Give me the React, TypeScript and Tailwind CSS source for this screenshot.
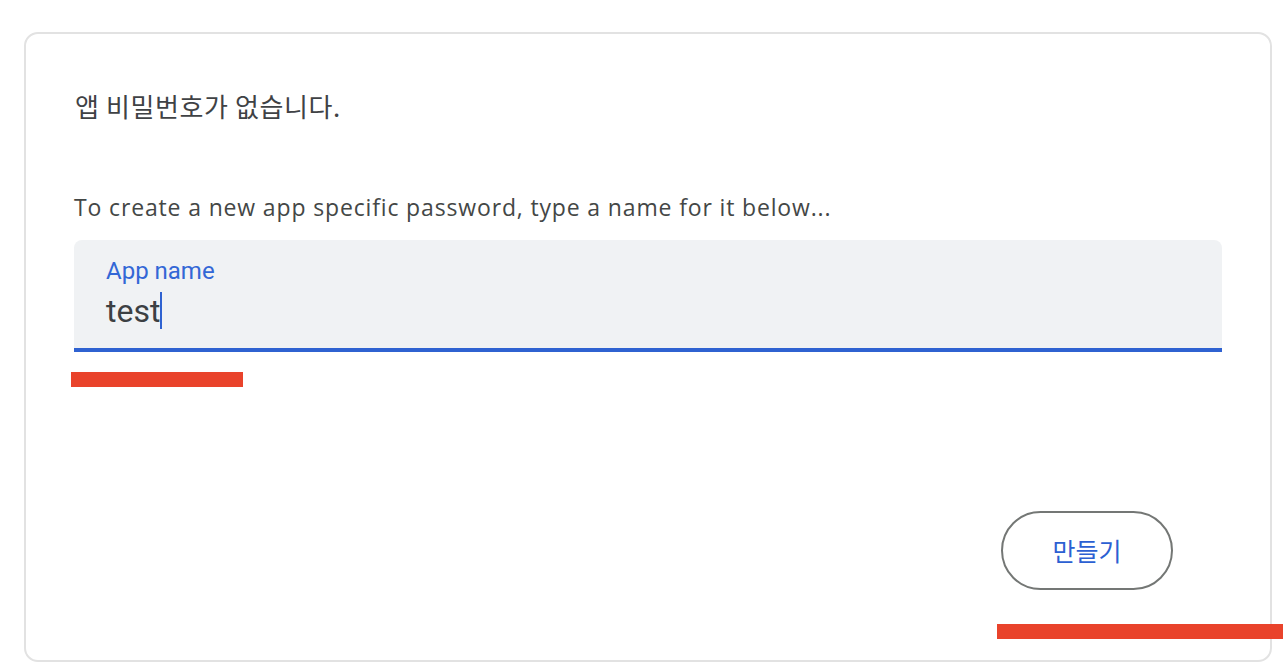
import React from 'react';

const latin = "font-['Roboto','Noto_Sans_CJK_KR',sans-serif]";
const body = "font-['Open_Sans','Noto_Sans_CJK_KR',sans-serif]";
const korean = "font-['Noto_Sans_CJK_KR','Noto_Sans',sans-serif]";

const AppPasswordCard: React.FC = () => {
  return (
    <div className="ml-[24px] mt-[32px] h-[630px] w-[1248px] rounded-[14px] border-2 border-[#e2e2e2] bg-white px-[48px] pt-[52px]">
      {/* 비어있는 상태 */}
      <p className={`${korean} text-[26px] leading-[40px] tracking-[0.6px] text-[#3f4245] pl-[1px]`}>앱 비밀번호가 없습니다.</p>

      <p className={`${body} mt-[65px] text-[23px] leading-[32px] tracking-[0.85px] text-[#444746]`}>
        To create a new app specific password, type a name for it below...
      </p>

      {/* 입력 필드 */}
      <div className="mt-[17px] h-[112px] rounded-t-[8px] border-b-4 border-[#2f62d1] bg-[#f0f2f4] px-[32px] pt-[17px]">
        <div className={`${latin} text-[24px] leading-[28px] text-[#3367d6]`}>App name</div>
        <div className={`${latin} mt-[7px] flex items-center text-[32px] leading-[36px] text-[#3c4043]`}>
          <span>test</span>
          <span className="inline-block h-[37px] w-[2px] bg-[#2f62d1]" />
        </div>
      </div>

      <div className="mt-[159px] flex justify-end pr-[49px]">
        <button
          className={`${korean} h-[79px] w-[172px] rounded-full border-2 border-[#747775] bg-white text-[25px] text-[#2c60d2]`}
        >
          만들기
        </button>
      </div>
    </div>
  );
};

export default function App() {
  return (
    <div className="relative h-[668px] w-[1286px] overflow-hidden bg-white">
      <AppPasswordCard />
      {/* 주석 표시 */}
      <div className="absolute left-[71px] top-[372px] h-[15px] w-[172px] bg-[#e9432b]" />
      <div className="absolute left-[997px] top-[624px] h-[15px] w-[286px] bg-[#e9432b]" />
    </div>
  );
}
